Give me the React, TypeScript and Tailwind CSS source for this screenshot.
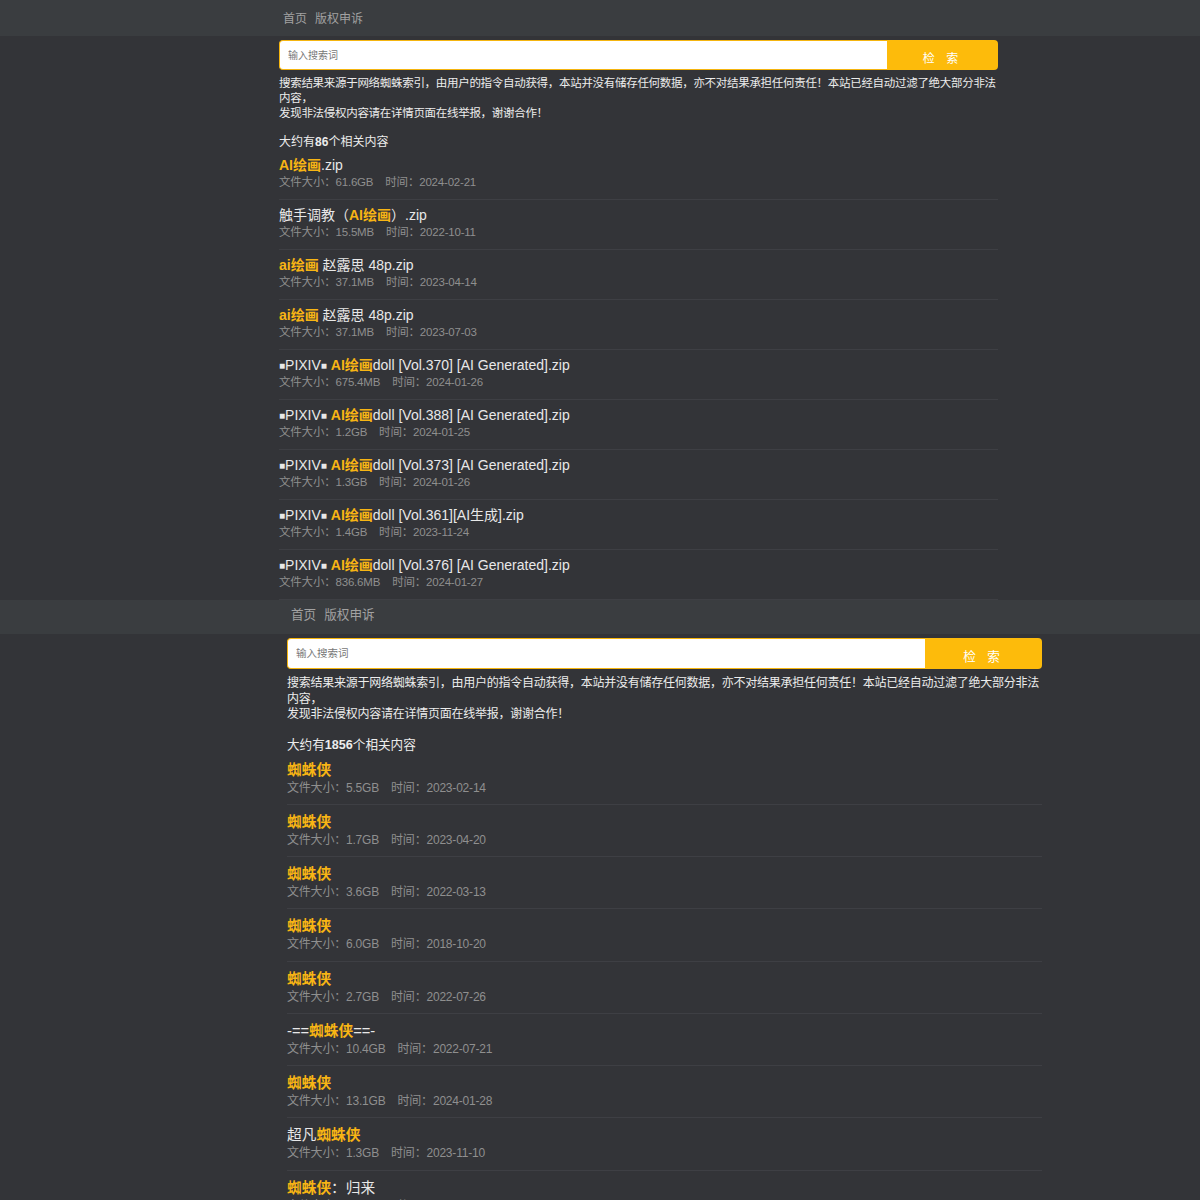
import { Fragment } from 'react';

interface Item {
  pre: string;
  hl: string;
  post: string;
  size: string;
  date: string;
}

interface Variant {
  wrap: string;
  header: string;
  nav: string;
  search: string;
  input: string;
  button: string;
  disclaimer: string;
  count: string;
  item: string;
  title: string;
  meta: string;
  box: string;
}

const aiItems: Item[] = [
  { pre: '', hl: 'AI绘画', post: '.zip', size: '61.6GB', date: '2024-02-21' },
  { pre: '触手调教（', hl: 'AI绘画', post: '）.zip', size: '15.5MB', date: '2022-10-11' },
  { pre: '', hl: 'ai绘画', post: ' 赵露思 48p.zip', size: '37.1MB', date: '2023-04-14' },
  { pre: '', hl: 'ai绘画', post: ' 赵露思 48p.zip', size: '37.1MB', date: '2023-07-03' },
  { pre: '■PIXIV■ ', hl: 'AI绘画', post: 'doll [Vol.370] [AI Generated].zip', size: '675.4MB', date: '2024-01-26' },
  { pre: '■PIXIV■ ', hl: 'AI绘画', post: 'doll [Vol.388] [AI Generated].zip', size: '1.2GB', date: '2024-01-25' },
  { pre: '■PIXIV■ ', hl: 'AI绘画', post: 'doll [Vol.373] [AI Generated].zip', size: '1.3GB', date: '2024-01-26' },
  { pre: '■PIXIV■ ', hl: 'AI绘画', post: 'doll [Vol.361][AI生成].zip', size: '1.4GB', date: '2023-11-24' },
  { pre: '■PIXIV■ ', hl: 'AI绘画', post: 'doll [Vol.376] [AI Generated].zip', size: '836.6MB', date: '2024-01-27' },
];

const spiderItems: Item[] = [
  { pre: '', hl: '蜘蛛侠', post: '', size: '5.5GB', date: '2023-02-14' },
  { pre: '', hl: '蜘蛛侠', post: '', size: '1.7GB', date: '2023-04-20' },
  { pre: '', hl: '蜘蛛侠', post: '', size: '3.6GB', date: '2022-03-13' },
  { pre: '', hl: '蜘蛛侠', post: '', size: '6.0GB', date: '2018-10-20' },
  { pre: '', hl: '蜘蛛侠', post: '', size: '2.7GB', date: '2022-07-26' },
  { pre: '-==', hl: '蜘蛛侠', post: '==-', size: '10.4GB', date: '2022-07-21' },
  { pre: '', hl: '蜘蛛侠', post: '', size: '13.1GB', date: '2024-01-28' },
  { pre: '超凡', hl: '蜘蛛侠', post: '', size: '1.3GB', date: '2023-11-10' },
  { pre: '', hl: '蜘蛛侠', post: '：归来', size: '2.1GB', date: '2023-05-02' },
];

// top half of the capture
const small: Variant = {
  wrap: 'ml-[279px] w-[719px]',
  header: 'h-9 pt-[2px]',
  nav: 'ml-[283px] gap-2 text-[12px]',
  search: 'mt-1 h-[30px]',
  input: 'pl-2 text-[10px]',
  button: 'w-[111px] pt-2 text-[12px]',
  disclaimer: 'mt-[6px] text-[11.5px] leading-[15px] tracking-[-0.3px]',
  count: 'mt-[14px] h-[15px] text-[12px] leading-[15px]',
  item: 'pt-[5px] pb-[9px]',
  title: 'h-5 text-[14px] leading-5',
  meta: 'h-[15px] text-[11.5px] leading-[15px] tracking-[-0.2px]',
  box: 'text-[10px]',
};

// bottom half, same page at ~105%
const large: Variant = {
  wrap: 'ml-[287px] w-[755px]',
  header: 'h-[34px] pb-1',
  nav: 'ml-[291px] gap-2 text-[12.6px]',
  search: 'mt-1 h-[31px]',
  input: 'pl-2 text-[10.5px]',
  button: 'w-[117px] pt-2 text-[12.6px]',
  disclaimer: 'mt-[7px] text-[12px] leading-[15.5px] tracking-[-0.25px]',
  count: 'mt-[14px] h-4 text-[12.6px] leading-4',
  item: 'pt-[7px] pb-2',
  title: 'h-[21px] text-[14.7px] leading-[21px]',
  meta: 'h-[15.25px] text-[12px] leading-[15.25px] tracking-[-0.2px]',
  box: 'text-[10.5px]',
};

function Title({ item, v }: { item: Item; v: Variant }) {
  const renderPlain = (s: string) =>
    s.split('■').map((part, i) => (
      <Fragment key={i}>
        {i > 0 && <span className={`${v.box} align-[1px]`}>■</span>}
        {part}
      </Fragment>
    ));
  return (
    <div className={`${v.title} overflow-visible text-[#e8e8e8] whitespace-nowrap`}>
      {renderPlain(item.pre)}
      <span className="font-bold text-[#f8b514]">{item.hl}</span>
      {renderPlain(item.post)}
    </div>
  );
}

function SearchPage({ v, count, items }: { v: Variant; count: string; items: Item[] }) {
  return (
    <div className="h-[600px] overflow-hidden bg-[#333438]">
      <div className={`${v.header} flex items-center bg-[#3a3d40]`}>
        <nav className={`${v.nav} flex text-[#a2a2a2]`}>
          <a>首页</a>
          <a>版权申诉</a>
        </nav>
      </div>

      <div className={v.wrap}>
        <div className={`${v.search} flex`}>
          <input
            type="text"
            placeholder="输入搜索词"
            className={`${v.input} flex-1 min-w-0 rounded-l-[4px] border border-[#f5b50f] border-r-0 bg-white text-[#333] placeholder:text-[#777] outline-none`}
          />
          <button className={`${v.button} rounded-r-[4px] bg-[#fdbb0b] text-white tracking-[4px]`}>
            检 索
          </button>
        </div>

        <p className={`${v.disclaimer} text-[#ececec]`}>
          搜索结果来源于网络蜘蛛索引，由用户的指令自动获得，本站并没有储存任何数据，亦不对结果承担任何责任！本站已经自动过滤了绝大部分非法内容，
          <br />
          发现非法侵权内容请在详情页面在线举报，谢谢合作！
        </p>

        <div className={`${v.count} text-[#ececec]`}>
          大约有<span className="font-bold">{count}</span>个相关内容
        </div>

        <ul>
          {items.map((item, i) => (
            <li key={i} className={`${v.item} border-b border-[#3e3f44]`}>
              <Title item={item} v={v} />
              <div className={`${v.meta} text-[#8f8f8f] whitespace-nowrap`}>
                文件大小：{item.size}
                <span className="ml-3">时间：{item.date}</span>
              </div>
            </li>
          ))}
        </ul>
      </div>
    </div>
  );
}

export default function App() {
  return (
    <div className="h-[1200px] w-[1200px] overflow-hidden bg-[#333438] font-['Liberation_Sans','Noto_Sans_CJK_SC',sans-serif]">
      <SearchPage v={small} count="86" items={aiItems} />
      <SearchPage v={large} count="1856" items={spiderItems} />
    </div>
  );
}
